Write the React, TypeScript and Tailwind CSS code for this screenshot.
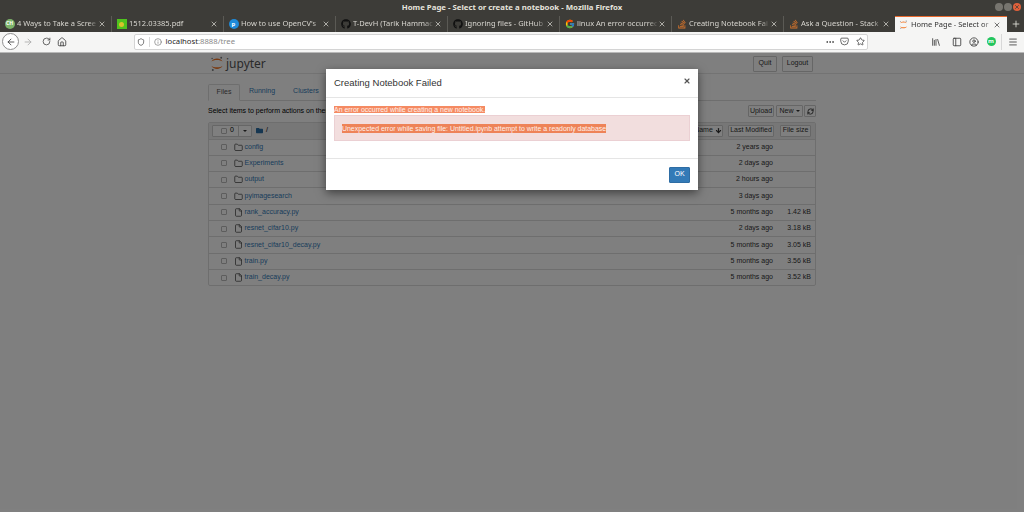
import React from "react";
import {
  ArrowLeft, ArrowRight, RotateCw, Home, Shield, Info, MoreHorizontal, Pocket, Star,
  Library, PanelLeft, CircleUser, Menu, X, Plus, ArrowDown, RefreshCw, Folder, File,
} from "lucide-react";
import { FaGithub, FaStackOverflow, FaFolder } from "react-icons/fa";
import { FcGoogle } from "react-icons/fc";

const JupyterLogo = ({ size = 14 }: { size?: number }) => (
  <svg width={size} height={size * 1.1} viewBox="0 0 20 22">
    <path d="M2 8 C5 2 15 2 18 8 C15 5 5 5 2 8Z" fill="#f37726" />
    <path d="M2 14 C5 20 15 20 18 14 C15 17 5 17 2 14Z" fill="#f37726" />
    <circle cx="16" cy="2.5" r="1.3" fill="#767677" />
    <circle cx="3" cy="3.5" r="1" fill="#767677" />
    <circle cx="4" cy="20" r="1.4" fill="#767677" />
  </svg>
);

const tabs = [
  { title: "4 Ways to Take a Scree", icon: <span className="flex h-[10px] w-[10px] items-center justify-center rounded-full bg-[#7cb36a] text-[5px] font-bold text-white">CH</span> },
  { title: "1512.03385.pdf", icon: <span className="flex h-[10px] w-[10px] items-center justify-center bg-[#4fc21e]"><span className="h-[5px] w-[5px] rounded-full bg-[#d8c22c]" /></span> },
  { title: "How to use OpenCV's", icon: <span className="flex h-[10px] w-[10px] items-center justify-center rounded-full bg-[#1f8ad8] text-[6px] font-bold text-white">p</span> },
  { title: "T-DevH (Tarik Hammac", icon: <FaGithub size={10} color="#111" /> },
  { title: "Ignoring files - GitHub", icon: <FaGithub size={10} color="#111" /> },
  { title: "linux An error occurrec", icon: <FcGoogle size={10} /> },
  { title: "Creating Notebook Fai", icon: <FaStackOverflow size={10} color="#d8742a" /> },
  { title: "Ask a Question - Stack", icon: <FaStackOverflow size={10} color="#d8742a" /> },
];

const files = [
  { name: "config", dir: true, time: "2 years ago", size: "" },
  { name: "Experiments", dir: true, time: "2 days ago", size: "" },
  { name: "output", dir: true, time: "2 hours ago", size: "" },
  { name: "pyimagesearch", dir: true, time: "3 days ago", size: "" },
  { name: "rank_accuracy.py", dir: false, time: "5 months ago", size: "1.42 kB" },
  { name: "resnet_cifar10.py", dir: false, time: "2 days ago", size: "3.18 kB" },
  { name: "resnet_cifar10_decay.py", dir: false, time: "5 months ago", size: "3.05 kB" },
  { name: "train.py", dir: false, time: "5 months ago", size: "3.56 kB" },
  { name: "train_decay.py", dir: false, time: "5 months ago", size: "3.52 kB" },
];

function Browser() {
  return (
    <div className="shrink-0 font-['Noto_Sans',sans-serif]">
      <div className="relative flex h-[16px] items-center justify-center bg-[#3d3c38] text-[7.8px] font-bold text-[#e6e4dd]">
        Home Page - Select or create a notebook - Mozilla Firefox
        <div className="absolute right-[3px] top-[3px] flex gap-[1px]">
          <span className="h-[8px] w-[8px] rounded-full bg-[#77756f]" />
          <span className="h-[8px] w-[8px] rounded-full bg-[#77756f]" />
          <span className="flex h-[8px] w-[8px] items-center justify-center rounded-full bg-[#e0603a]">
            <X size={6} color="#3d3c38" strokeWidth={3} />
          </span>
        </div>
      </div>
      <div className="flex h-[16px] bg-[#3d3c38] text-[7.5px] text-[#d8d6d0]">
        {tabs.map((t) => (
          <div key={t.title} className="flex h-[16px] w-[112px] shrink-0 items-center border-r border-[#5b5a55] pl-[4.5px] pr-[5px]">
            <span className="mr-[2.5px] flex w-[10px] shrink-0 justify-center">{t.icon}</span>
            <span className="flex-1 overflow-hidden whitespace-nowrap [mask-image:linear-gradient(to_right,black_88%,transparent)]">{t.title}</span>
            <X size={8} strokeWidth={2} color="#e4e2dc" className="shrink-0" />
          </div>
        ))}
        <div className="flex h-[16px] w-[112px] shrink-0 -translate-x-px items-center border-t border-[#e8692d] bg-[#f5f5f4] pl-[4px] pr-[6px] text-[#333]">
          <span className="mr-[3px]"><JupyterLogo size={9} /></span>
          <span className="flex-1 overflow-hidden whitespace-nowrap [mask-image:linear-gradient(to_right,black_88%,transparent)]">Home Page - Select or</span>
          <X size={8} strokeWidth={2} color="#333" className="shrink-0" />
        </div>
        <div className="flex flex-1 items-center justify-center"><Plus size={10} color="#e6e4dd" /></div>
      </div>
      <div className="flex h-[20.5px] items-center border-b border-[#b8b8b8] bg-[#f5f5f4] text-[#3b3b3b]">
        <span className="ml-[2px] flex h-[17px] w-[17px] shrink-0 items-center justify-center rounded-full border border-[#8f8f8f] bg-white">
          <ArrowLeft size={10} />
        </span>
        <ArrowRight size={10} color="#a9a9a9" className="ml-[4px] shrink-0" />
        <RotateCw size={9} className="ml-[8.5px] shrink-0" />
        <Home size={10} className="ml-[6.5px] shrink-0" />
        <div className="ml-[67px] flex h-[16px] flex-1 items-center rounded-[2px] border border-[#d4d4d4] bg-white text-[7.7px]">
          <Shield size={8} className="ml-[2px]" />
          <span className="ml-[4px] h-[10px] w-px bg-[#d8d8d8]" />
          <Info size={8} color="#777" className="ml-[3.5px]" />
          <span className="ml-[4px] text-[#222]">localhost<span className="text-[#8a8a8a]">:8888/tree</span></span>
          <span className="flex-1" />
          <MoreHorizontal size={10} />
          <Pocket size={9} className="ml-[5.5px]" />
          <Star size={9} className="ml-[6.5px] mr-[2.5px]" />
        </div>
        <Library size={10} className="ml-[63px] shrink-0" />
        <PanelLeft size={10} className="ml-[11px] shrink-0" />
        <CircleUser size={10} className="ml-[7px] shrink-0" />
        <span className="ml-[7.5px] flex h-[9px] w-[9px] shrink-0 items-center justify-center rounded-full bg-[#22c55e] text-[6px] font-bold text-white">m</span>
        <span className="ml-[5.5px] h-[16px] w-px shrink-0 bg-[#d8d8d8]" />
        <Menu size={10} className="ml-[6px] mr-[6px] shrink-0" />
      </div>
    </div>
  );
}

const Btn = ({ children, className = "" }: { children: React.ReactNode; className?: string }) => (
  <span className={"flex items-center justify-center rounded-[1px] border border-[#ccc] bg-white text-[7px] text-[#333] " + className}>{children}</span>
);

function Notebook() {
  return (
    <div className="flex-1 bg-white font-['Liberation_Sans',sans-serif] text-[7px] text-[#000]">
      <div className="flex h-[21px] items-center border-b border-[#e7e7e7] pl-[210px] pr-[211px] pt-[2px]">
        <JupyterLogo size={14} />
        <span className="ml-[2px] font-['Noto_Sans',sans-serif] text-[12px] leading-none text-[#555]">jupyter</span>
        <span className="flex-1" />
        <Btn className="h-[16px] w-[24px]">Quit</Btn>
        <Btn className="ml-[5px] h-[16px] w-[31px]">Logout</Btn>
      </div>
      <div className="ml-[208px] w-[608px]">
        <div className="mt-[10px] flex h-[17px] border-b border-[#ddd] text-[7px]">
          <span className="flex h-[17px] w-[32px] items-center justify-center rounded-t-[2px] border border-[#ddd] border-b-white bg-white text-[#555]">Files</span>
          <span className="ml-[9px] flex items-center text-[#337ab7]">Running</span>
          <span className="ml-[18px] flex items-center text-[#337ab7]">Clusters</span>
        </div>
        <div className="flex h-[21px] items-center">
          <span>Select items to perform actions on them.</span>
          <span className="flex-1" />
          <Btn className="h-[12px] w-[26px]">Upload</Btn>
          <Btn className="ml-[2px] h-[12px] w-[27px] gap-[2px]">New <span className="h-0 w-0 border-x-[2px] border-t-[2px] border-x-transparent border-t-[#333]" /></Btn>
          <Btn className="ml-[1px] h-[12px] w-[12px]"><RefreshCw size={7} strokeWidth={3} /></Btn>
        </div>
        <div className="rounded-[2px] border border-[#ddd]">
          <div className="flex h-[16px] items-center bg-[#eee] pl-[3px] pr-[4px]">
            <span className="flex h-[12px] w-[40px] rounded-[1px] border border-[#ccc] bg-white">
              <span className="flex flex-1 items-center justify-center gap-[3px] border-r border-[#ccc] pl-[4px]">
                <span className="h-[6px] w-[6px] rounded-[1px] border border-[#bbb]" />0
              </span>
              <span className="flex w-[12px] items-center justify-center"><span className="h-0 w-0 border-x-[2px] border-t-[2px] border-x-transparent border-t-[#333]" /></span>
            </span>
            <FaFolder size={7} color="#2b6ca3" className="ml-[4px]" />
            <span className="ml-[3px]">/</span>
            <span className="flex-1" />
            <Btn className="h-[12px] w-[30px] gap-[2px]">Name <ArrowDown size={7} strokeWidth={4} /></Btn>
            <Btn className="ml-[5px] h-[12px] w-[46px]">Last Modified</Btn>
            <Btn className="ml-[6px] h-[12px] w-[31px]">File size</Btn>
          </div>
          {files.map((f) => (
            <div key={f.name} className="flex h-[16.3px] items-center border-t border-[#ddd] pl-[12px] pr-[4px]">
              <span className="h-[6px] w-[6px] rounded-[1px] border border-[#bbb] bg-white" />
              {f.dir ? (
                <Folder size={9} color="#444" className="ml-[7px]" />
              ) : (
                <File size={9} color="#444" className="ml-[7px]" />
              )}
              <span className="ml-[1.5px] text-[#337ab7]">{f.name}</span>
              <span className="flex-1" />
              <span className="text-[#333]">{f.time}</span>
              <span className="w-[38px] text-right text-[#333]">{f.size}</span>
            </div>
          ))}
        </div>
      </div>
    </div>
  );
}

function Modal() {
  return (
    <>
      <div className="absolute inset-x-0 bottom-0 top-[52.5px] bg-black/50" />
      <div className="absolute left-[326px] top-[69px] flex h-[121px] w-[372px] flex-col bg-white font-['Liberation_Sans',sans-serif] shadow-[0_3px_9px_rgba(0,0,0,0.5)]">
        <div className="flex h-[29px] items-center justify-between border-b border-[#e5e5e5] pl-[8px] pr-[7px]">
          <span className="text-[9.5px] text-[#333]">Creating Notebook Failed</span>
          <X size={8} strokeWidth={3.5} color="#555" className="mb-[5px]" />
        </div>
        <div className="h-[61px] border-b border-[#e5e5e5] pl-[8px] pr-[8px] pt-[7px] text-[6.95px] leading-[9px] text-[#fff0ea]">
          <span className="bg-[#f58a62]">An error occurred while creating a new notebook.</span>
          <div className="mt-[1px] flex h-[26px] items-center border border-[#ebd0d3] bg-[#f2dede] pl-[7px]">
            <span className="bg-[#ee8358]">Unexpected error while saving file: Untitled.ipynb attempt to write a readonly database</span>
          </div>
        </div>
        <div className="flex flex-1 items-center justify-end pr-[8px]">
          <span className="flex h-[16px] w-[21px] items-center justify-center rounded-[1px] border border-[#2e6da4] bg-[#337ab7] text-[7px] text-white">OK</span>
        </div>
      </div>
    </>
  );
}

export default function App() {
  return (
    <div className="relative flex h-[512px] w-[1024px] flex-col overflow-hidden">
      <Browser />
      <Notebook />
      <Modal />
    </div>
  );
}
